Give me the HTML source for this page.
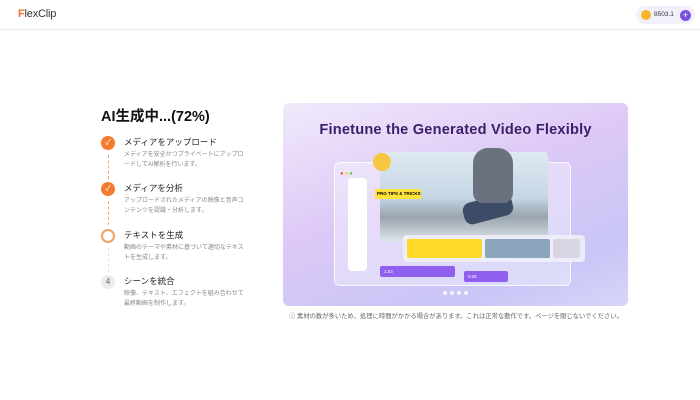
<!DOCTYPE html>
<html><head><meta charset="utf-8"><style>
*{margin:0;padding:0;box-sizing:border-box}
body{width:700px;height:400px;background:#fff;font-family:"Liberation Sans","Noto Sans CJK JP",sans-serif;position:relative;overflow:hidden}
.hdr{position:absolute;left:0;top:0;width:700px;height:30px;border-bottom:1px solid #ececf0}
.logo{position:absolute;left:18px;top:8px;font-size:11px;color:#333;letter-spacing:-.2px}
.logo b{color:#f26b2a;font-weight:bold}
.coin{position:absolute;left:636px;top:6px;width:59px;height:18px;border-radius:9px;background:#f4f0fb}
.coin .c{position:absolute;left:5px;top:4px;width:10px;height:10px;border-radius:50%;background:#f5b728}
.coin .t{position:absolute;left:18px;top:5px;font-size:6.5px;color:#333}
.coin .p{position:absolute;left:44px;top:4px;width:11px;height:11px;border-radius:50%;background:#7a4fe0;color:#fff;font-size:9px;line-height:10px;text-align:center}
h1{position:absolute;left:101px;top:105px;font-size:14.5px;font-weight:bold;color:#111}
.st{position:absolute;left:101px}
.ic{position:absolute;left:0;top:0;width:14px;height:14px;border-radius:50%;background:#f47b2b;color:#fff;font-size:8px;text-align:center;line-height:14px}
.tt{position:absolute;left:23px;top:0;font-size:8.5px;color:#222;white-space:nowrap}
.ds{position:absolute;left:23px;top:14px;font-size:6px;color:#888;line-height:10px;width:124px}
.ln{position:absolute;left:7px;width:0;border-left:1px dashed #f4a572}
.card{position:absolute;left:283px;top:103px;width:345px;height:203px;border-radius:6px;background:linear-gradient(160deg,#f1e9fb 0%,#dcc8f6 45%,#c8c6f6 80%,#d8d4fa 100%);overflow:hidden}
.card h2{position:absolute;left:0;width:345px;top:19px;text-align:center;font-size:14.6px;font-weight:bold;color:#3b1f6a;letter-spacing:.2px}
.panel{position:absolute;left:51px;top:59px;width:237px;height:124px;border:1px solid rgba(255,255,255,.8);border-radius:6px;background:rgba(255,255,255,.35)}
.photo{position:absolute;left:97px;top:49px;width:168px;height:90px;border-radius:4px;background:linear-gradient(180deg,#dfe9f2 0%,#c5d6e4 50%,#9aa4ad 72%,#dfe6ec 100%)}
.guy{position:absolute;left:190px;top:45px;width:40px;height:55px;background:#6a7280;border-radius:15px 15px 10px 10px}
.legs{position:absolute;left:180px;top:95px;width:50px;height:22px;background:#3c4b66;border-radius:8px;transform:rotate(-15deg)}
.tool{position:absolute;left:65px;top:75px;width:19px;height:93px;border-radius:4px;background:#fff}
.strip{position:absolute;left:120px;top:132px;width:182px;height:27px;border-radius:4px;background:rgba(240,238,250,.9)}
.clip{position:absolute;top:4px;height:19px;border-radius:2px}
.bar{position:absolute;height:11px;border-radius:2px;background:#8f5ff0;color:#fff;font-size:4.5px;line-height:11px;padding-left:4px}
.dots{position:absolute;left:160px;top:188px;height:5px;line-height:0}
.dots i{display:inline-block;width:4px;height:4px;border-radius:50%;background:#fff;margin-right:3px;opacity:.8}
.note{position:absolute;left:289px;top:311px;font-size:6.3px;color:#666;white-space:nowrap}
</style></head><body>
<div class="hdr"><div class="logo"><b>F</b>lexClip</div>
<div class="coin"><div class="c"></div><div class="t">8503.1</div><div class="p">+</div></div></div>
<h1>AI生成中...(72%)</h1>
<div class="st" style="top:136px"><div class="ic">✓</div><div class="tt">メディアをアップロード</div><div class="ds">メディアを安全かつプライベートにアップロードしてAI解析を行います。</div><div class="ln" style="top:19px;height:24px"></div></div>
<div class="st" style="top:182px"><div class="ic">✓</div><div class="tt">メディアを分析</div><div class="ds">アップロードされたメディアの映像と音声コンテンツを認識・分析します。</div><div class="ln" style="top:19px;height:24px"></div></div>
<div class="st" style="top:229px"><div class="ic" style="background:#fff;border:2px solid #f4a060"></div><div class="tt">テキストを生成</div><div class="ds">動画のテーマや素材に基づいて適切なテキストを生成します。</div><div class="ln" style="top:19px;height:24px;border-color:#e4e4e8"></div></div>
<div class="st" style="top:275px"><div class="ic" style="background:#ececf0;color:#666">4</div><div class="tt">シーンを統合</div><div class="ds">映像、テキスト、エフェクトを組み合わせて最終動画を制作します。</div></div>
<div class="card"><h2>Finetune the Generated Video Flexibly</h2>
<div class="panel"></div>
<div style="position:absolute;left:57px;top:68px;font-size:6px;color:#f55;letter-spacing:1px">●<span style="color:#fc3">●</span><span style="color:#5c5">●</span></div>
<div class="photo"></div><div class="legs"></div><div class="guy"></div>
<div style="position:absolute;left:90px;top:50px;width:18px;height:18px;border-radius:50%;background:#f8c640"></div>
<div style="position:absolute;left:92px;top:86px;width:46px;height:10px;background:#ffe23a;font-size:4.5px;font-weight:bold;line-height:10px;padding-left:2px">PRO TIPS &amp; TRICKS</div>
<div class="tool"></div>
<div class="strip"><div class="clip" style="left:4px;width:75px;background:#ffd92a"></div><div class="clip" style="left:82px;width:65px;background:#8aa5bc"></div><div class="clip" style="left:150px;width:27px;background:#d9d6e4"></div></div>
<div class="bar" style="left:97px;top:163px;width:75px">1:53</div>
<div class="bar" style="left:181px;top:168px;width:44px">0:25</div>
<div class="dots"><i></i><i></i><i></i><i></i></div>
</div>
<div class="note">ⓘ 素材の数が多いため、処理に時間がかかる場合があります。これは正常な動作です。ページを閉じないでください。</div>
</body></html>
